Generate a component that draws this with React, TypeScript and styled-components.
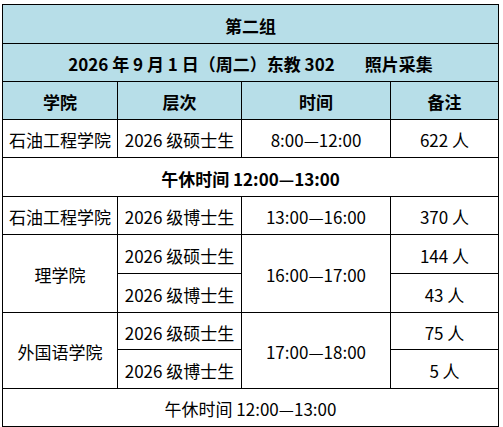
import React from "react";
import styled, { createGlobalStyle } from "styled-components";

const GlobalStyle = createGlobalStyle`
  html, body {
    margin: 0;
    padding: 0;
    background: #fff;
  }
  body {
    font-family: "Noto Sans CJK SC", "DejaVu Sans", sans-serif;
    color: #000;
  }
`;

const Page = styled.div`
  padding: 4px 0 0 2px;
`;

const Sheet = styled.div`
  display: grid;
  grid-template-columns: 114px 123px 148px 107px;
  grid-template-rows: 38px 37px 37px 37px 38px 37px 38px 38px 36px 38px 37px;
  gap: 1px;
  padding: 1px;
  width: max-content;
  background: #000;
`;

const Cell = styled.div<{ $head?: boolean; $bold?: boolean; $cols?: number; $rows?: number }>`
  display: flex;
  align-items: center;
  justify-content: center;
  padding-top: 2px;
  background: ${(p) => (p.$head ? "#b7dee8" : "#fff")};
  font-size: 17px;
  font-weight: ${(p) => (p.$bold ? 700 : 400)};
  white-space: pre;
  grid-column: ${(p) => (p.$cols ? `span ${p.$cols}` : "auto")};
  grid-row: ${(p) => (p.$rows ? `span ${p.$rows}` : "auto")};
`;

const Gap = styled.span<{ $w: number }>`
  display: inline-block;
  width: ${(p) => p.$w}px;
`;

type Row = { college: string; level: string; time: string; count: string };

const App: React.FC = () => {
  const first: Row = { college: "石油工程学院", level: "2026 级硕士生", time: "8:00—12:00", count: "622 人" };
  const second: Row = { college: "石油工程学院", level: "2026 级博士生", time: "13:00—16:00", count: "370 人" };

  return (
    <>
      <GlobalStyle />
      <Page>
        <Sheet>
          <Cell $head $bold $cols={4}>第二组</Cell>
          <Cell $head $bold $cols={4}>
            2026 年 9 月 1 日（周二）东教 302
            <Gap $w={30} />
            照片采集
          </Cell>
          <Cell $head $bold>学院</Cell>
          <Cell $head $bold>层次</Cell>
          <Cell $head $bold>时间</Cell>
          <Cell $head $bold>备注</Cell>

          <Cell>{first.college}</Cell>
          <Cell>{first.level}</Cell>
          <Cell>{first.time}</Cell>
          <Cell>{first.count}</Cell>

          <Cell $bold $cols={4}>午休时间 12:00—13:00</Cell>

          <Cell>{second.college}</Cell>
          <Cell>{second.level}</Cell>
          <Cell>{second.time}</Cell>
          <Cell>{second.count}</Cell>

          <Cell $rows={2}>理学院</Cell>
          <Cell>2026 级硕士生</Cell>
          <Cell $rows={2}>16:00—17:00</Cell>
          <Cell>144 人</Cell>
          <Cell>2026 级博士生</Cell>
          <Cell>43 人</Cell>

          <Cell $rows={2}>外国语学院</Cell>
          <Cell>2026 级硕士生</Cell>
          <Cell $rows={2}>17:00—18:00</Cell>
          <Cell>75 人</Cell>
          <Cell>2026 级博士生</Cell>
          <Cell>5 人</Cell>

          <Cell $cols={4}>午休时间 12:00—13:00</Cell>
        </Sheet>
      </Page>
    </>
  );
};

export default App;
